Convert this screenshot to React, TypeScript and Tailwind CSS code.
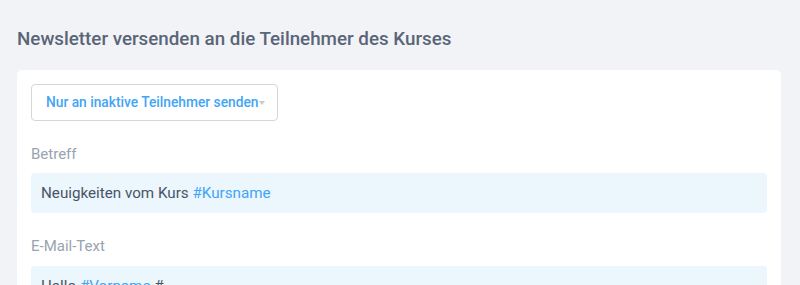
export default function App() {
    return (
        <div className="min-h-[285px] w-full overflow-hidden bg-[#f2f3f7] pl-[17px] pr-[19px] pt-[27px] font-['Roboto',sans-serif]">
            <h1 className="text-[18.8px] font-medium leading-[24px] text-[#5a6577]">
                Newsletter versenden an die Teilnehmer des Kurses
            </h1>

            <div className="mt-[19px] rounded-[5px] bg-white p-[14px]">
                <button className="flex h-[37px] w-[247px] items-center rounded-[4px] border border-[#d3d7dd] bg-white pl-[14px] text-[13.75px] font-medium text-[#42a5f5]">
                    Nur an inaktive Teilnehmer senden
                    <span className="ml-[1px] mt-[1px] h-0 w-0 border-x-[3.5px] border-t-[4px] border-x-transparent border-t-[#c5cbd2]" />
                </button>

                <div className="mt-[23px] text-[15px] leading-[20px] text-[#98a4b0]">Betreff</div>
                <div className="mt-[9px] flex h-[40px] items-center rounded-[4px] bg-[#ebf6fd] px-[10px] text-[15.2px] text-[#4a5466]">
                    Neuigkeiten vom Kurs&nbsp;<span className="text-[#42a5f5]">#Kursname</span>
                </div>

                <div className="mt-[23px] text-[15px] leading-[20px] text-[#98a4b0]">E-Mail-Text</div>
                <div className="mt-[10px] h-[160px] rounded-[4px] bg-[#ebf6fd] px-[10px] pt-[8px] text-[15.2px] leading-[24px] text-[#4a5466]">
                    Hallo <span className="text-[#42a5f5]">#Vorname</span> #,
                </div>
            </div>
        </div>
    )
}
